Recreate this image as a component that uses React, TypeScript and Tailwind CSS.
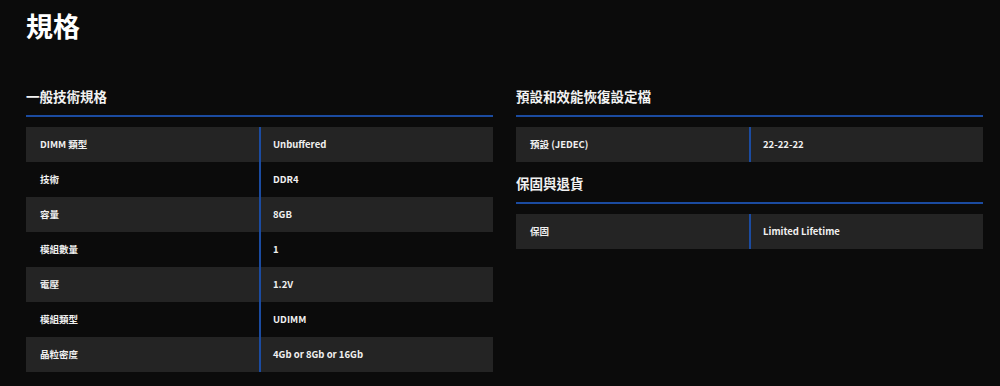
const general = [
    ["DIMM 類型", "Unbuffered"],
    ["技術", "DDR4"],
    ["容量", "8GB"],
    ["模組數量", "1"],
    ["電壓", "1.2V"],
    ["模組類型", "UDIMM"],
    ["晶粒密度", "4Gb or 8Gb or 16Gb"],
];

const profiles = [["預設 (JEDEC)", "22-22-22"]];
const warranty = [["保固", "Limited Lifetime"]];

const font = "font-['Noto_Sans_CJK_TC','Noto_Sans',sans-serif]";

const Heading = ({ title, className = "" }: { title: string; className?: string }) => (
    <h2
        className={`border-b-2 border-[#1b4ba0] pb-[9px] text-[13.5px] font-bold leading-[20px] text-[#f2f2f2] ${className}`}>
        {title}
    </h2>
);

const SpecTable = ({ rows }: { rows: string[][] }) => (
    <div className="mt-[10px] flex flex-col">
        {rows.map(([label, value], i) => (
            <div
                key={label}
                className={`grid h-[35px] grid-cols-[233px_1fr] text-[9.5px] font-bold text-[#f0f0f0] ${
                    i % 2 == 0 ? "bg-[#242424]" : ""
                }`}>
                <div className="flex items-center pl-[14px]">{label}</div>
                <div className="flex items-center border-l-2 border-[#1b4ba0] pl-[12px]">
                    {value}
                </div>
            </div>
        ))}
    </div>
);

const App = () => {
    return (
        <div className={`h-[386px] w-full bg-[#0b0b0b] pl-[26px] pr-[17px] pt-[8px] ${font}`}>
            <h1 className="text-[27px] font-bold leading-[36px] text-white">規格</h1>
            <div className="mt-[42px] grid grid-cols-[467px_467px] gap-x-[23px]">
                <div>
                    <Heading title="一般技術規格" />
                    <SpecTable rows={general} />
                </div>
                <div>
                    <Heading title="預設和效能恢復設定檔" />
                    <SpecTable rows={profiles} />
                    <Heading title="保固與退貨" className="mt-[11px]" />
                    <SpecTable rows={warranty} />
                </div>
            </div>
        </div>
    );
};

export default App;
